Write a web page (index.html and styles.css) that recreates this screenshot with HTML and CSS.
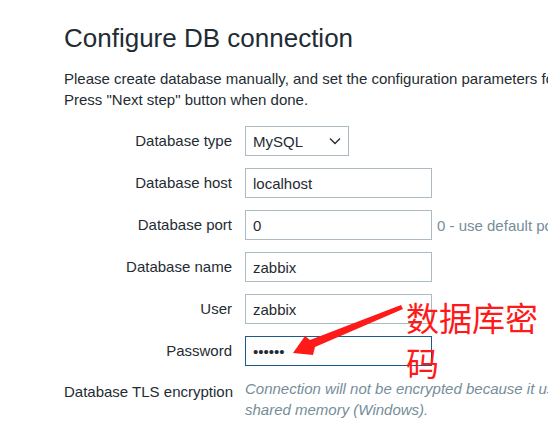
FILE: index.html
```html
<!DOCTYPE html>
<html lang="en">
<head>
<meta charset="utf-8">
<title>Configure DB connection</title>
<link rel="stylesheet" href="styles.css">
</head>
<body>
<div class="page">
  <h1 class="title">Configure DB connection</h1>
  <p class="intro">Please create database manually, and set the configuration parameters for connection to this database.<br>Press "Next step" button when done.</p>
  <form class="form">
    <label class="label" for="type">Database type</label>
    <div class="field">
      <div class="select-wrap">
        <select id="type" class="select"><option>MySQL</option></select>
        <svg class="chevron" width="12" height="8" viewBox="0 0 12 8"><path d="M1 1.5 L6 6.5 L11 1.5" fill="none" stroke="#1f2c33" stroke-width="1.3"/></svg>
      </div>
    </div>

    <label class="label" for="host">Database host</label>
    <div class="field"><input id="host" class="input" type="text" value="localhost"></div>

    <label class="label" for="port">Database port</label>
    <div class="field"><input id="port" class="input" type="text" value="0"><span class="hint">0 - use default port</span></div>

    <label class="label" for="name">Database name</label>
    <div class="field"><input id="name" class="input" type="text" value="zabbix"></div>

    <label class="label" for="user">User</label>
    <div class="field"><input id="user" class="input" type="text" value="zabbix"></div>

    <label class="label" for="pass">Password</label>
    <div class="field"><input id="pass" class="input input-focus" type="password" value="zabbix"></div>

    <div class="label label-top">Database TLS encryption</div>
    <div class="field"><p class="note">Connection will not be encrypted because it uses a socket file (on Unix) or<br>shared memory (Windows).</p></div>
  </form>
</div>

<svg class="arrow" width="548" height="430" viewBox="0 0 548 430">
  <polygon points="293,353 305,336 310,340 401,305 403,309 315,347 313,355" fill="#ff1a1a"/>
</svg>
<div class="annotation">数据库密码</div>
</body>
</html>
```

FILE: styles.css
```css
html, body {
  margin: 0;
  padding: 0;
  overflow: hidden;
  background: #ffffff;
}

body {
  width: 548px;
  height: 430px;
  position: relative;
  font-family: Arial, "Liberation Sans", sans-serif;
  font-size: 15px;
  color: #1f2c33;
}

.page {
  padding: 22px 0 0 64px;
  white-space: nowrap;
}

.title {
  margin: 0;
  font-size: 26px;
  font-weight: normal;
  line-height: 32px;
}

.intro {
  margin: 14px 0 0;
  line-height: 21px;
}

.form {
  display: grid;
  grid-template-columns: 168px auto;
  column-gap: 13px;
  row-gap: 12px;
  align-items: center;
  margin-top: 16px;
}

.label {
  text-align: right;
  line-height: 30px;
}

.label-top {
  align-self: start;
  line-height: 21px;
  padding-top: 3px;
}

.field {
  display: flex;
  align-items: center;
}

.input {
  box-sizing: border-box;
  width: 187px;
  height: 30px;
  margin: 0;
  padding: 0 7px;
  border: 1px solid #acbbc2;
  border-radius: 0;
  font-family: Arial, "Liberation Sans", sans-serif;
  font-size: 15px;
  color: #1f2c33;
  background: #ffffff;
  outline: none;
}

.input-focus {
  border-color: #1c5a8a;
  letter-spacing: 0;
}

.select-wrap {
  position: relative;
  width: 104px;
  height: 30px;
}

.select {
  box-sizing: border-box;
  width: 104px;
  height: 30px;
  margin: 0;
  padding: 0 7px;
  border: 1px solid #acbbc2;
  border-radius: 0;
  appearance: none;
  -webkit-appearance: none;
  background: #ffffff;
  font-family: Arial, "Liberation Sans", sans-serif;
  font-size: 15px;
  color: #1f2c33;
}

.chevron {
  position: absolute;
  right: 8px;
  top: 11px;
  pointer-events: none;
}

.hint {
  margin-left: 5px;
  color: #768d99;
}

.note {
  margin: 0;
  font-style: italic;
  color: #768d99;
  line-height: 21px;
}

.arrow {
  position: absolute;
  left: 0;
  top: 0;
}

.annotation {
  position: absolute;
  left: 406px;
  top: 295px;
  width: 140px;
  font-family: "Noto Sans CJK SC", sans-serif;
  font-size: 33px;
  line-height: 45px;
  color: #ff1a1a;
}
```
